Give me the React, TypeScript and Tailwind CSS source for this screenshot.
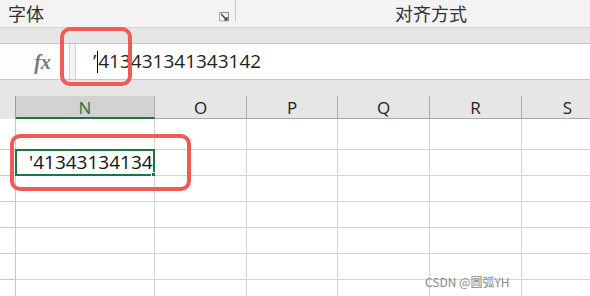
const cols = [
  { name: "N", w: 139 },
  { name: "O", w: 92 },
  { name: "P", w: 91 },
  { name: "Q", w: 92 },
  { name: "R", w: 92 },
  { name: "S", w: 92 },
];

const rowHeights = [31, 26, 26, 26, 26, 26, 26];

const cjk = "font-['Noto_Sans_CJK_SC',sans-serif]";
const sans = "font-['Open_Sans','Noto_Sans',sans-serif]";

export default function App() {
  return (
    <div className="relative w-[590px] h-[296px] overflow-hidden bg-white">
      {/* ribbon group labels */}
      <div className="flex h-[28px] bg-[#f3f3f3] border-b border-[#d4d4d4]">
        <div className="relative w-[236px] h-[22px] border-r border-[#c8c8c8]">
          <span className={`absolute left-[8px] top-[2px] text-[18px] leading-[22px] text-[#333] ${cjk}`}>字体</span>
          <svg className="absolute left-[218px] top-[11px]" width="12" height="11" viewBox="0 0 12 11">
            <path d="M1.5 1.5h9v8.5" fill="none" stroke="#888" strokeWidth="1" />
            <path d="M1.5 1.5v8.5h9" fill="none" stroke="#aaa" strokeWidth="1" />
            <path d="M3 3l6 6M9 6v3H6" fill="none" stroke="#333" strokeWidth="1.2" />
          </svg>
        </div>
        <div className="flex-1 flex justify-center pl-[36px]">
          <span className={`mt-[2px] text-[18px] leading-[22px] text-[#333] ${cjk}`}>对齐方式</span>
        </div>
      </div>
      <div className="h-[16px] bg-[#e6e6e6] border-b border-[#c6c6c6]" />

      {/* formula bar */}
      <div className="flex h-[36px] bg-white border-b border-[#c6c6c6]">
        <div className="w-[70px] flex items-center justify-center pl-[16px] border-r border-[#d4d4d4] bg-[#fdfdfd]">
          <span className="font-['Liberation_Serif',serif] italic text-[20px] text-[#7a7a7a] font-bold leading-none">fx</span>
        </div>
        <div className="w-[5px] bg-[#f3f3f3]" />
        <div className="flex-1 flex items-center border-l border-[#d4d4d4] pl-[17px]">
          <span className={`text-[19px] text-[#222] leading-none ${sans}`}>’</span>
          <span className="w-[1px] h-[22px] bg-black ml-[1px]" />
          <span className={`text-[19px] text-[#222] leading-none ${sans}`}>413431341343142</span>
        </div>
      </div>
      <div className="h-[16px] bg-[#e6e6e6]" />

      {/* sheet */}
      <div className="flex">
        <div className="w-[16px] shrink-0 flex flex-col">
          <div className="h-[23px] bg-[#e6e6e6] border-r border-[#9a9a9a]" />
          {rowHeights.map((h, i) => (
            <div key={i} style={{ height: h }} className="border-r border-b border-[#c8c8c8] bg-white" />
          ))}
        </div>
        {cols.map((c, ci) => (
          <div key={c.name} style={{ width: c.w }} className="shrink-0 flex flex-col">
            <div
              className={`h-[23px] flex items-center justify-center pt-[2px] text-[17px] border-r ${sans} ${
                ci === 0
                  ? "bg-[#d2d2d2] text-[#217346] border-[#ababab] border-b-2 border-b-[#217346]"
                  : "bg-[#e6e6e6] text-[#222] border-[#ababab] border-b border-b-[#ababab]"
              }`}
            >
              {c.name}
            </div>
            {rowHeights.map((h, ri) => (
              <div
                key={ri}
                style={{ height: h }}
                className="relative border-r border-b border-[#d4d4d4] bg-white"
              >
                {ci === 0 && ri === 1 && (
                  <div className="absolute -left-[1px] -top-[1px] right-[-1px] bottom-[-1px] border-2 border-[#217346] flex items-center pl-[12px]">
                    <span className={`text-[19px] text-[#111] leading-none ${sans}`}>'41343134134</span>
                    <div className="absolute right-[-4px] bottom-[-4px] w-[6px] h-[6px] bg-[#217346] border border-white" />
                  </div>
                )}
              </div>
            ))}
          </div>
        ))}
      </div>

      {/* red annotation boxes */}
      <div className="absolute left-[60px] top-[27px] w-[72px] h-[59px] rounded-[10px] border-[4px] border-[#ef5b56]" />
      <div className="absolute left-[10px] top-[134px] w-[181px] h-[57px] rounded-[10px] border-[4px] border-[#ef5b56]" />

      {/* watermark */}
      <div className={`absolute left-[425px] top-[273px] text-[12px] text-[#888] ${cjk}`}>CSDN @圆弧YH</div>
    </div>
  );
}
